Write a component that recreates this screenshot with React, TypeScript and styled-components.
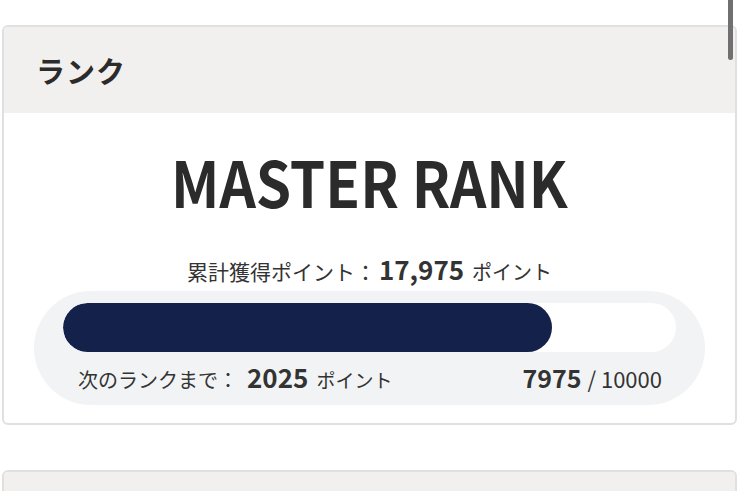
import React from "react";
import styled, { createGlobalStyle } from "styled-components";

const Global = createGlobalStyle`
  html, body { margin: 0; padding: 0; background: #fff; }
  body { font-family: "Noto Sans CJK JP", "Noto Sans", sans-serif; color: #333; overflow: hidden; }
`;

const Page = styled.div`
  position: relative;
  padding: 25px 3px 0 2px;
  display: flex;
  flex-direction: column;
  gap: 45px;
  height: 491px;
  box-sizing: border-box;
  overflow: hidden;
`;

const Card = styled.section`
  border: 2px solid #e0e0e0;
  border-radius: 6px;
  background: #fff;
  overflow: hidden;
  flex-shrink: 0;
`;

const CardHeader = styled.header`
  background: #f1f0ee;
  height: 86px;
  display: flex;
  align-items: center;
  padding-left: 32px;
`;

const CardTitle = styled.h2`
  margin: 0;
  font-size: 29px;
  font-weight: 700;
  color: #2b2b2b;
  letter-spacing: 1px;
`;

const CardBody = styled.div`
  display: flex;
  flex-direction: column;
  align-items: center;
  padding: 26px 30px 18px 30px;
`;

const RankName = styled.div`
  font-size: 63px;
  font-weight: 700;
  line-height: 84px;
  color: #2b2b2b;
  transform: scaleX(0.9);
`;

const TotalLine = styled.div`
  margin-top: 31px;
  font-size: 21px;
  line-height: 30px;
  display: flex;
  align-items: baseline;
`;

const Strong = styled.span<{ $size: number; $ml: number; $mr: number }>`
  font-weight: 700;
  font-size: ${(p) => p.$size}px;
  margin: 0 ${(p) => p.$mr}px 0 ${(p) => p.$ml}px;
`;

const Unit = styled.span<{ $size: number }>`
  font-size: ${(p) => p.$size}px;
`;

const ProgressPanel = styled.div`
  margin-top: 4px;
  align-self: stretch;
  background: #f2f3f5;
  border-radius: 57px;
  padding: 12px 29px 5px 29px;
`;

const Track = styled.div`
  height: 49px;
  background: #fff;
  border-radius: 25px;
  overflow: hidden;
`;

const Fill = styled.div`
  height: 100%;
  background: #14214a;
  border-radius: 25px;
`;

const Footer = styled.div`
  display: flex;
  justify-content: space-between;
  align-items: baseline;
  padding: 5px 14px 0 15px;
  font-size: 20px;
  line-height: 40px;
`;

const Label = styled.span`
  display: flex;
  align-items: baseline;
`;

const Ratio = styled.span`
  display: flex;
  align-items: baseline;
  gap: 6px;
  font-size: 22px;
`;

const ScrollThumb = styled.div`
  position: absolute;
  top: 0;
  right: 7px;
  width: 5px;
  height: 60px;
  border-radius: 0 0 3px 3px;
  background: #707070;
`;

export default function App() {
  const current = 7975;
  const max = 10000;
  return (
    <>
      <Global />
      <Page>
        <Card>
          <CardHeader>
            <CardTitle>ランク</CardTitle>
          </CardHeader>
          <CardBody>
            <RankName>MASTER RANK</RankName>
            <TotalLine>
              累計獲得ポイント：
              <Strong $size={26} $ml={3} $mr={8}>17,975</Strong>
              <Unit $size={20}>ポイント</Unit>
            </TotalLine>
            <ProgressPanel>
              <Track>
                <Fill style={{ width: `${(current / max) * 100}%` }} />
              </Track>
              <Footer>
                <Label>
                  次のランクまで：
                  <Strong $size={26} $ml={9} $mr={8}>2025</Strong>
                  <Unit $size={19}>ポイント</Unit>
                </Label>
                <Ratio>
                  <Strong $size={25} $ml={0} $mr={0}>7975</Strong>
                  <span>/ 10000</span>
                </Ratio>
              </Footer>
            </ProgressPanel>
          </CardBody>
        </Card>
        <Card>
          <CardHeader />
        </Card>
        <ScrollThumb />
      </Page>
    </>
  );
}
